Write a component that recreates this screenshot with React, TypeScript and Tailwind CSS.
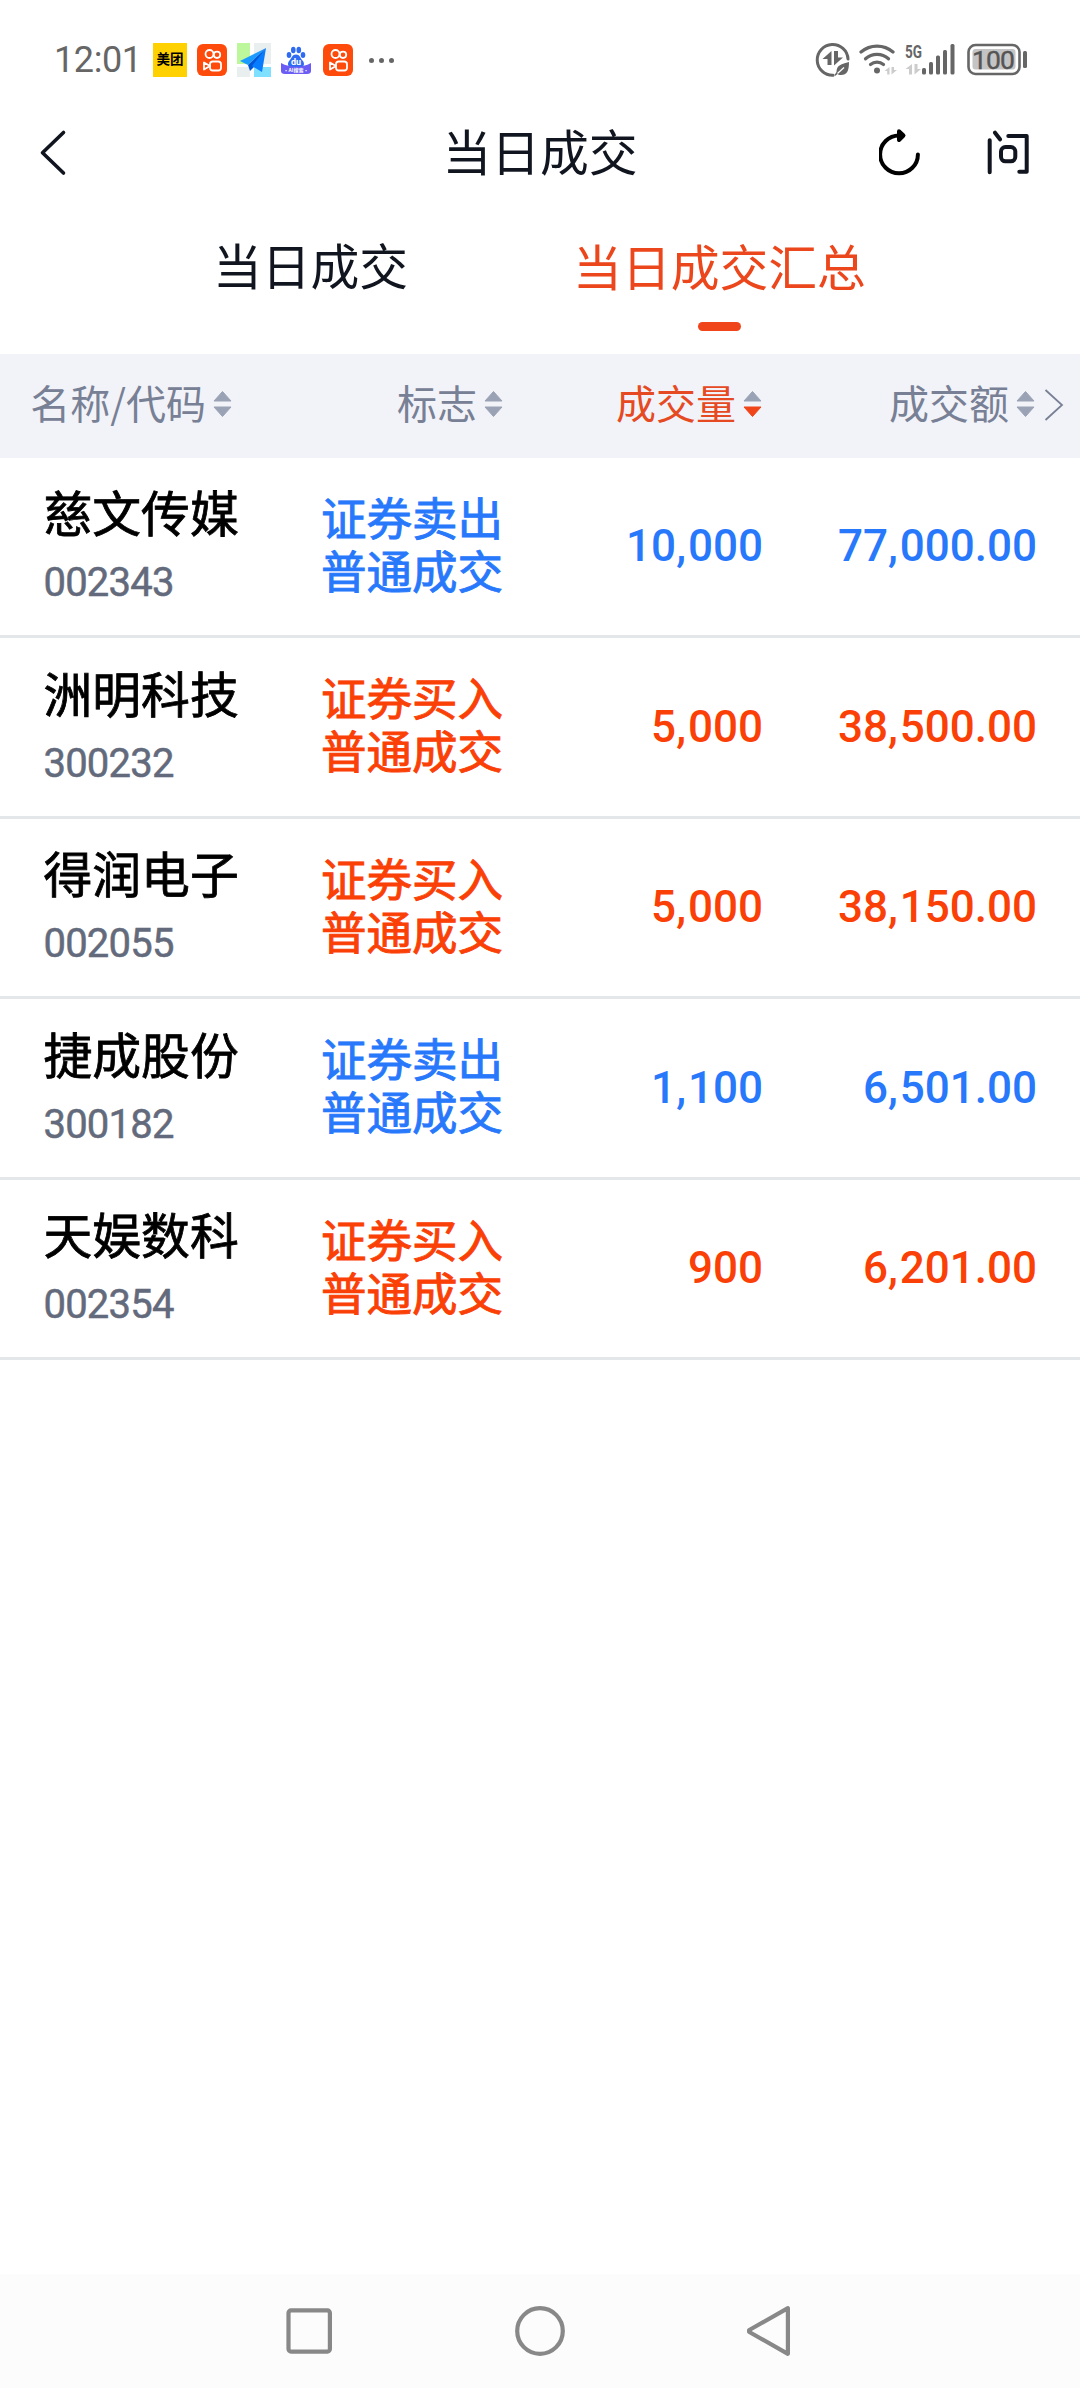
import { ReactNode } from 'react'

interface Trade {
  name: string
  code: string
  side: 'buy' | 'sell'
  volume: string
  amount: string
}

const trades: Trade[] = [
  { name: '慈文传媒', code: '002343', side: 'sell', volume: '10,000', amount: '77,000.00' },
  { name: '洲明科技', code: '300232', side: 'buy', volume: '5,000', amount: '38,500.00' },
  { name: '得润电子', code: '002055', side: 'buy', volume: '5,000', amount: '38,150.00' },
  { name: '捷成股份', code: '300182', side: 'sell', volume: '1,100', amount: '6,501.00' },
  { name: '天娱数科', code: '002354', side: 'buy', volume: '900', amount: '6,201.00' },
]

const sideStyles = {
  buy: { label: '证券买入', color: 'text-[#fa4006]' },
  sell: { label: '证券卖出', color: 'text-[#2878fc]' },
}

function KuaishouIcon() {
  return (
    <svg className="w-[30px] h-[32px]" viewBox="0 0 30 32" fill="none">
      <rect width="30" height="32" rx="6" fill="#fe4a0b" />
      <g stroke="#fff" strokeWidth="1.8">
        <circle cx="12.5" cy="10" r="4" />
        <circle cx="20" cy="10.8" r="3.2" />
        <rect x="13" y="17.5" width="11" height="9" rx="2.8" />
        <path d="M13 22 7 18.5v7z" strokeLinejoin="round" />
      </g>
    </svg>
  )
}

function MapIcon() {
  return (
    <svg className="w-[34px] h-[34px]" viewBox="0 0 34 34">
      <rect width="34" height="34" fill="#fff" />
      <path d="M0 0h13v21H0z" fill="#bdf79c" />
      <path d="M17 0h17v21H17zM0 24h13v10H0z" fill="#e9efef" />
      <path d="M17 24h17v10H17z" fill="#7fe0ff" />
      <path d="M29 5 3 18l8 4z" fill="#1a9bff" />
      <path d="M29 5 11 22l2 6 4-4z" fill="#0057d6" />
      <path d="M29 5 15 23l10 6z" fill="#087cff" />
    </svg>
  )
}

function BaiduIcon() {
  return (
    <svg className="w-[30px] h-[30px]" viewBox="0 0 30 30">
      <g fill="#2e6bf2">
        <ellipse cx="8" cy="10" rx="2.3" ry="3" />
        <ellipse cx="12.3" cy="5" rx="2.3" ry="3.2" />
        <ellipse cx="17.8" cy="5" rx="2.3" ry="3.2" />
        <ellipse cx="22" cy="10" rx="2.3" ry="3" />
        <path d="M15 9.5c4 0 4 3.5 6.5 6s2 7-2.5 7h-8c-4.5 0-5-4.5-2.5-7s2.5-6 6.5-6z" />
      </g>
      <path d="M0 18c9 5 21 5 30 0v8q0 3-4 3H4q-4 0-4-3z" fill="#6a5cf5" />
      <text x="15" y="19.5" textAnchor="middle" fontSize="9" fontWeight="700" fill="#fff" fontFamily="Roboto, sans-serif">du</text>
      <text x="15" y="27" textAnchor="middle" fontSize="5" fontWeight="700" fill="#fff" fontFamily="'Noto Sans CJK SC', sans-serif">·AI搜索·</text>
    </svg>
  )
}

function DataSaverIcon() {
  return (
    <svg className="w-[36px] h-[36px]" viewBox="0 0 36 36" fill="none">
      <path d="M33 17A15.4 15.4 0 1 0 18 33.3" stroke="#666" strokeWidth="3" strokeLinecap="round" />
      <path d="M16.5 9v14h-4v-6H7.5zM19 9h4v6.5h5L19 23.5z" fill="#666" />
      <path d="M34 20c0 9-2 13-8 13-2 0-3-.5-3.5-1L20 34l-.5-1 2-3c0-7 5-8 12.500-10z" fill="#666" />
      <path d="M22.5 31.5l6.5-6" stroke="#fff" strokeWidth="1.3" />
    </svg>
  )
}

function WifiIcon() {
  return (
    <svg className="w-[40px] h-[34px]" viewBox="0 0 40 34" fill="none">
      <g stroke="#666" strokeWidth="3.2" strokeLinecap="round">
        <path d="M2 9a24.5 24.5 0 0 1 32 0" />
        <path d="M6.5 15.8a17 17 0 0 1 23 0" />
        <path d="M11.5 21.5a10 10 0 0 1 13 0" />
      </g>
      <circle cx="18" cy="27.5" r="3" fill="#666" />
      <path d="M30.5 24v7.5h-2.3V28h-2.7zM32.5 24v7.5l5.5-4.5h-3v-3z" fill="#ccc" />
    </svg>
  )
}

function SignalIcon() {
  return (
    <svg className="w-[51px] h-[34px] overflow-visible" viewBox="0 0 51 34" fill="#666">
      <text x="0" y="15" fontSize="18.5" fontWeight="700" textLength="17" lengthAdjust="spacingAndGlyphs" fontFamily="Roboto, sans-serif">5G</text>
      <path d="M7 21v10.5H4V26H.5zM9.5 21v10.5L16 26h-3.5v-5z" fill="#ccc" />
      <rect x="17" y="25" width="4" height="6.5" rx="1.5" />
      <rect x="24" y="19" width="4" height="12.5" rx="1.5" />
      <rect x="31" y="12.5" width="4" height="19" rx="1.5" />
      <rect x="38" y="7" width="4" height="24.5" rx="1.5" />
      <rect x="45.5" y="1" width="4" height="30.5" rx="1.5" />
    </svg>
  )
}

function BatteryIcon() {
  return (
    <svg className="w-[62px] h-[34px]" viewBox="0 0 62 34">
      <rect x="1.5" y="2" width="51" height="29" rx="7" fill="none" stroke="#666" strokeWidth="2.6" />
      <rect x="5.5" y="6" width="43" height="20.5" rx="3" fill="#c4c4c4" />
      <rect x="56" y="8" width="4" height="17" rx="1.5" fill="#666" />
      <text x="26.5" y="26" textAnchor="middle" fontSize="26.5" textLength="43" fill="#555" stroke="#555" strokeWidth="0.4" fontFamily="Roboto, sans-serif">100</text>
    </svg>
  )
}

function StatusBar() {
  return (
    <div className="flex h-[120px] justify-between items-start pt-[43px] pl-[54px] pr-[51px]">
      <div className="flex items-center h-[34px]">
        <span className="w-[99px] text-[36px] leading-[34px] tracking-[-0.4px] text-[#666] whitespace-nowrap">12:01</span>
        <div className="w-[34px] h-[34px] bg-[#ffd100] text-black text-[13.5px] leading-[33px] font-bold text-center whitespace-nowrap">美团</div>
        <div className="flex items-center ml-[10px] gap-[10px]">
          <KuaishouIcon />
          <MapIcon />
          <BaiduIcon />
        </div>
        <div className="ml-[12px]">
          <KuaishouIcon />
        </div>
        <div className="flex gap-[5px] ml-[16px]">
          <span className="w-[5px] h-[5px] rounded-full bg-[#666]" />
          <span className="w-[5px] h-[5px] rounded-full bg-[#666]" />
          <span className="w-[5px] h-[5px] rounded-full bg-[#666]" />
        </div>
      </div>
      <div className="flex items-center h-[34px]">
        <DataSaverIcon />
        <div className="ml-[8px]"><WifiIcon /></div>
        <div className="ml-[6px]"><SignalIcon /></div>
        <div className="ml-[11px]"><BatteryIcon /></div>
      </div>
    </div>
  )
}

function NavBar() {
  return (
    <div className="grid grid-cols-[1fr_auto_1fr] items-center h-[68px] text-[#10151f]">
      <svg className="ml-[38px] w-[30px] h-[50px]" viewBox="0 0 30 50" fill="none">
        <path d="M25.5 3.5 4.5 23.7l21 20.3" stroke="currentColor" strokeWidth="3.6" strokeLinecap="round" strokeLinejoin="round" />
      </svg>
      <h1 className="pt-[2px] text-[48.8px] leading-[66px]">当日成交</h1>
      <div className="flex items-center justify-end pr-[48px] gap-[61px]">
        <svg className="w-[46px] h-[50px]" viewBox="0 0 46 50" fill="none" stroke="#000" strokeWidth="4" strokeLinecap="round" strokeLinejoin="round">
          <path d="M38.9 25.4A18.9 18.9 0 1 1 20 6.5" />
          <path d="M20 2.3 24.5 6.5 20 11z" />
        </svg>
        <svg className="w-[46px] h-[50px]" viewBox="0 0 46 50" fill="none" stroke="currentColor" strokeWidth="4" strokeLinecap="round" strokeLinejoin="round">
          <path d="M3.7 11.3v32M9 3.7l5 6.6M22.3 7h18.4v35.7h-7.4" />
          <rect x="15" y="18" width="14.3" height="14.3" rx="4.5" />
        </svg>
      </div>
    </div>
  )
}

function Tabs() {
  return (
    <div className="flex h-[166px] pt-[43px] px-[106px] text-[48.8px] leading-[76px]">
      <div className="w-[409px] text-center text-[#10151f]">当日成交</div>
      <div className="w-[409px] flex flex-col items-center text-[#ec471c]">
        <span className="pt-px">当日成交汇总</span>
        <span className="mt-[14px] w-[43px] h-[9px] rounded-full bg-[#f0441a]" />
      </div>
    </div>
  )
}

function SortIcon({ active }: { active?: boolean }) {
  return (
    <svg className="ml-[7px] w-[19px] h-[28px]" viewBox="0 0 19 28" strokeWidth="1" strokeLinejoin="round">
      <path d="M9.5 1.5 18 11H1z" fill="#9aa3b5" stroke="#9aa3b5" />
      <path
        d="M1 17h17l-8.5 9.5z"
        className={active ? 'fill-[#f0441a] stroke-[#f0441a]' : 'fill-[#9aa3b5] stroke-[#9aa3b5]'}
      />
    </svg>
  )
}

function HeaderCell({ children, active }: { children: ReactNode; active?: boolean }) {
  return (
    <div className={`flex items-center justify-end ${active ? 'text-[#e54a22]' : 'text-[#788095]'}`}>
      <span className="pb-[4px]">{children}</span>
      <SortIcon active={active} />
    </div>
  )
}

function TableHeader() {
  return (
    <div className="grid grid-cols-[232px_271px_259px_273px_1fr] h-[103.8px] pb-[4px] bg-[#f2f3f8] text-[40px] items-center font-['Noto_Sans_CJK_SC',sans-serif]">
      <HeaderCell>名称/代码</HeaderCell>
      <HeaderCell>标志</HeaderCell>
      <HeaderCell active>成交量</HeaderCell>
      <HeaderCell>成交额</HeaderCell>
      <svg className="ml-[9px] mt-[2px] w-[20px] h-[34px]" viewBox="0 0 20 34" fill="none">
        <path d="M1.5 2 18 17 1.5 32" stroke="#788095" strokeWidth="1.8" />
      </svg>
    </div>
  )
}

function Figure({ value }: { value: string }) {
  return (
    <div className="pb-px text-[44px] font-medium">
      {value.split(',').map((part, i) => (
        <span key={i}>
          {i > 0 && <span className="tracking-[2px]">,</span>}
          {part}
        </span>
      ))}
    </div>
  )
}

function TradeRow({ trade }: { trade: Trade }) {
  const side = sideStyles[trade.side]

  return (
    <div className="grid grid-cols-[277px_226px_260px_274px] h-[180.5px] border-b-[3px] border-[#e4e7ea] items-center">
      <div className="pl-[43.5px] pt-[3px]">
        <div className="text-[48.8px] leading-[70px] text-black [-webkit-text-stroke:0.8px_#000]">{trade.name}</div>
        <div className="text-[40px] leading-[64px] tracking-[-0.8px] text-[#636a7c] [-webkit-text-stroke:0.5px_#636a7c]">{trade.code}</div>
      </div>
      <div className={`text-right text-[45.5px] leading-[53px] [-webkit-text-stroke:0.9px_currentColor] ${side.color}`}>
        <div>{side.label}</div>
        <div>普通成交</div>
      </div>
      <div className={`text-right ${side.color}`}><Figure value={trade.volume} /></div>
      <div className={`text-right ${side.color}`}><Figure value={trade.amount} /></div>
    </div>
  )
}

function SystemNav() {
  return (
    <div className="flex h-[114px] bg-[#fcfcfc] items-center justify-center gap-[182px]">
      <svg className="w-[50px] h-[54px]" viewBox="0 0 50 54" fill="none" stroke="#888" strokeWidth="4.2">
        <rect x="5.5" y="6.4" width="41.4" height="41.2" rx="2.5" />
      </svg>
      <svg className="w-[50px] h-[54px]" viewBox="0 0 50 54" fill="none" stroke="#888" strokeWidth="4.2">
        <circle cx="25" cy="27" r="22.8" />
      </svg>
      <svg className="w-[50px] h-[54px]" viewBox="0 0 50 54" fill="none" stroke="#888" strokeWidth="4.2" strokeLinejoin="round">
        <path d="M40.9 4.2v45.6L2.3 28q-.8-1 0-2z" />
      </svg>
    </div>
  )
}

export default function App() {
  return (
    <div className="flex flex-col w-[1080px] h-[2388px] bg-white font-[Roboto,'Noto_Sans_CJK_SC',sans-serif]">
      <StatusBar />
      <NavBar />
      <Tabs />
      <TableHeader />
      <div className="flex-1">
        {trades.map((trade) => (
          <TradeRow key={trade.code} trade={trade} />
        ))}
      </div>
      <SystemNav />
    </div>
  )
}
